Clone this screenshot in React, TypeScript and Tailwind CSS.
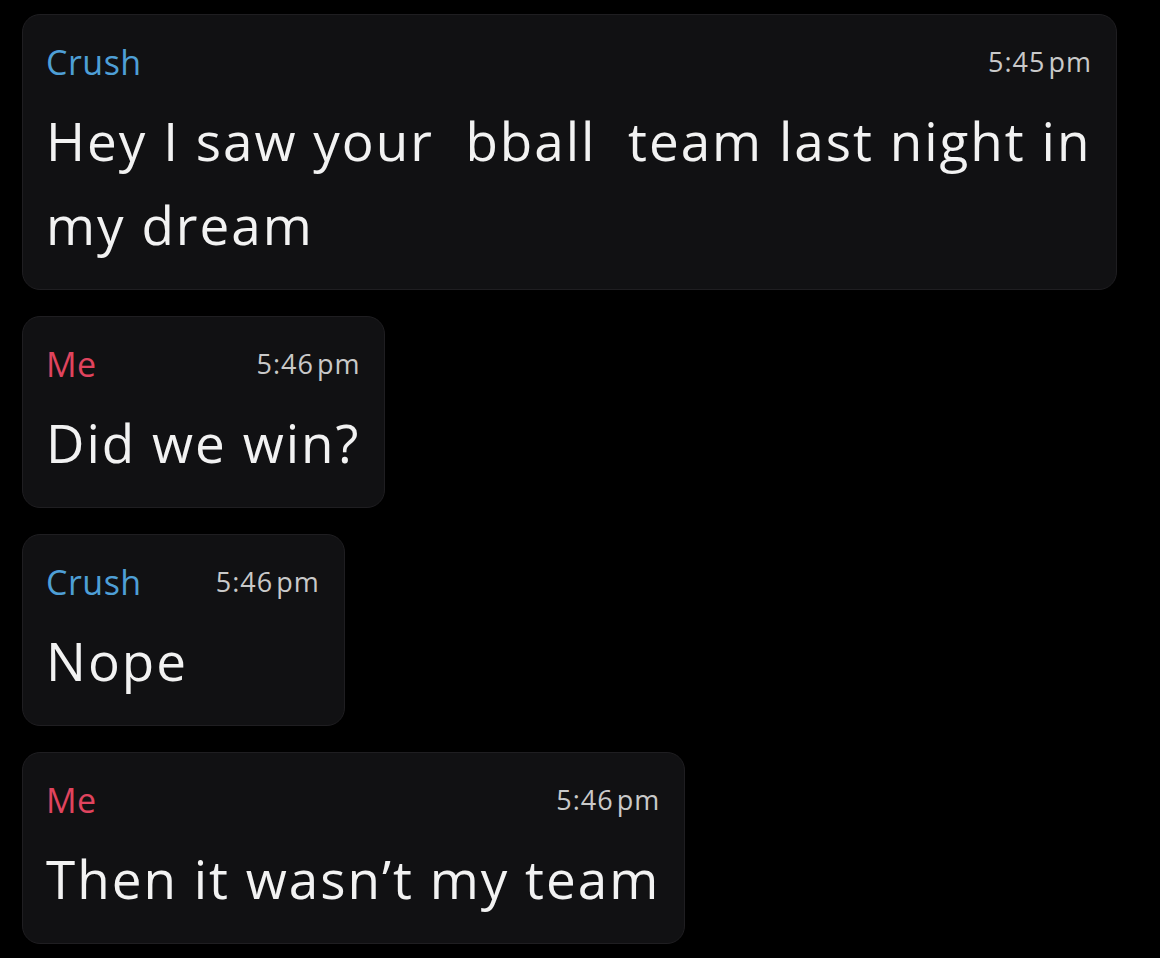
import React from "react";

type Msg = { who: "Crush" | "Me"; time: string; text: string; full?: boolean };

const msgs: Msg[] = [
  { who: "Crush", time: "5:45", text: "Hey I saw your\u00a0\u00a0bball\u00a0\u00a0team last night in my dream", full: true },
  { who: "Me", time: "5:46", text: "Did we win?" },
  { who: "Crush", time: "5:46", text: "Nope" },
  { who: "Me", time: "5:46", text: "Then it wasn\u2019t my team" },
];

function Bubble({ m }: { m: Msg }) {
  return (
    <div
      className={
        "flex flex-col rounded-[18px] border border-[#1f1e21] bg-[#111113] pl-[23px] pr-[24px] pt-[26px] pb-[22px] " +
        (m.full ? "w-[1095px]" : "self-start")
      }
    >
      <div className="flex items-center justify-between gap-[74px] h-[42px]">
        <span
          className={
            "text-[34px] leading-[42px] tracking-[0.5px] " +
            (m.who === "Crush" ? "text-[#4e9fd6]" : "text-[#e0445e]")
          }
        >
          {m.who}
        </span>
        <span className="text-[27px] leading-[42px] tracking-[1px] text-[#c9c9c9]">
          {m.time}
          <span className="ml-[3px]">pm</span>
        </span>
      </div>
      <div className="mt-[16px] text-[53px] leading-[84px] tracking-[2px] text-[#f2f2f2]">{m.text}</div>
    </div>
  );
}

export default function App() {
  return (
    <div
      className="w-[1160px] h-[958px] bg-black flex flex-col gap-[26px] pl-[22px] pt-[14px] overflow-hidden"
      style={{ fontFamily: "'Open Sans', 'Noto Sans', sans-serif" }}
    >
      {msgs.map((m, i) => (
        <Bubble key={i} m={m} />
      ))}
    </div>
  );
}
